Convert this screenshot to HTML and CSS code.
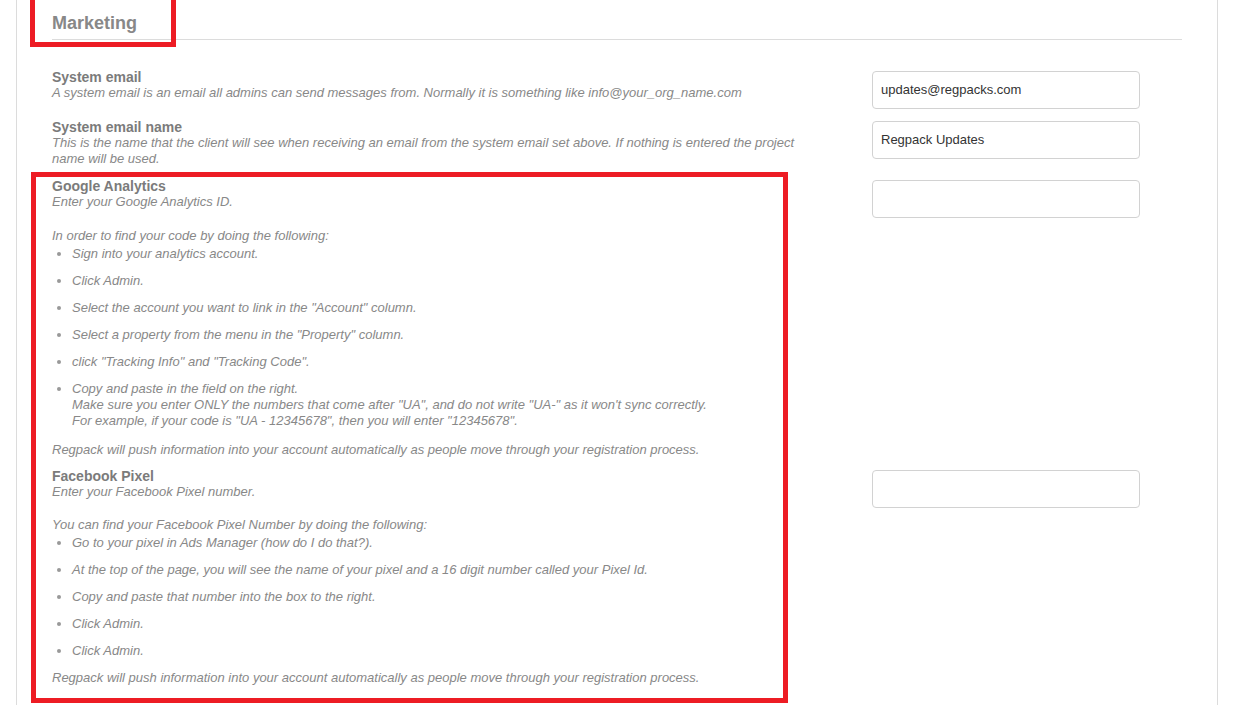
FILE: index.html
```html
<!DOCTYPE html>
<html>
<head>
<meta charset="utf-8">
<link rel="stylesheet" href="styles.css">
</head>
<body>
<div class="panel">
  <div class="panel-head"><h2 class="title">Marketing</h2></div>
  <div class="rows">
    <div class="row">
      <div class="info">
        <div class="label">System email</div>
        <p class="desc">A system email is an email all admins can send messages from. Normally it is something like info@your_org_name.com</p>
      </div>
      <div class="field"><div class="input">updates@regpacks.com</div></div>
    </div>
    <div class="row">
      <div class="info">
        <div class="label">System email name</div>
        <p class="desc">This is the name that the client will see when receiving an email from the system email set above. If nothing is entered the project name will be used.</p>
      </div>
      <div class="field"><div class="input">Regpack Updates</div></div>
    </div>
    <div class="row row-ga">
      <div class="info">
        <div class="label">Google Analytics</div>
        <p class="desc">Enter your Google Analytics ID.</p>
        <p class="desc gap gap-ga">In order to find your code by doing the following:</p>
        <ul class="steps steps-ga">
          <li>Sign into your analytics account.</li>
          <li>Click Admin.</li>
          <li>Select the account you want to link in the "Account" column.</li>
          <li>Select a property from the menu in the "Property" column.</li>
          <li>click "Tracking Info" and "Tracking Code".</li>
          <li>Copy and paste in the field on the right.<br>Make sure you enter ONLY the numbers that come after "UA", and do not write "UA-" as it won't sync correctly.<br>For example, if your code is "UA - 12345678", then you will enter "12345678".</li>
        </ul>
        <p class="desc after">Regpack will push information into your account automatically as people move through your registration process.</p>
      </div>
      <div class="field"><div class="input"></div></div>
    </div>
    <div class="row">
      <div class="info">
        <div class="label">Facebook Pixel</div>
        <p class="desc">Enter your Facebook Pixel number.</p>
        <p class="desc gap">You can find your Facebook Pixel Number by doing the following:</p>
        <ul class="steps steps-fb">
          <li>Go to your pixel in Ads Manager (how do I do that?).</li>
          <li>At the top of the page, you will see the name of your pixel and a 16 digit number called your Pixel Id.</li>
          <li>Copy and paste that number into the box to the right.</li>
          <li>Click Admin.</li>
          <li>Click Admin.</li>
        </ul>
        <p class="desc">Regpack will push information into your account automatically as people move through your registration process.</p>
      </div>
      <div class="field"><div class="input"></div></div>
    </div>
  </div>
  <div class="mark mark-title"></div>
  <div class="mark mark-block"></div>
</div>
</body>
</html>
```
FILE: styles.css
```css
html, body {
  margin: 0;
  padding: 0;
  background: #fff;
  overflow: hidden;
}
body {
  font-family: "Liberation Sans", Arial, sans-serif;
  height: 705px;
}
.panel {
  position: relative;
  margin-left: 16px;
  width: 1202px;
  height: 705px;
  border-left: 1px solid #dcdcdc;
  border-right: 1px solid #dcdcdc;
  padding: 0 35px;
  box-sizing: border-box;
}
.panel-head {
  padding-top: 12px;
  border-bottom: 1px solid #dcdcdc;
  height: 27px;
}
.title {
  margin: 0;
  font-size: 18px;
  line-height: 22px;
  font-weight: bold;
  color: #888;
}
.rows {
  padding-top: 29px;
  display: flex;
  flex-direction: column;
  gap: 10px;
}
.row {
  display: flex;
  align-items: flex-start;
}
.row-ga {
  margin-top: 1px;
}
.info {
  width: 750px;
}
.field {
  margin-left: 70px;
  padding-top: 2px;
}
.input {
  width: 268px;
  height: 38px;
  box-sizing: border-box;
  border: 1px solid #d2d2d2;
  border-radius: 4px;
  padding: 0 8px;
  font-size: 13px;
  line-height: 36px;
  color: #333;
}
.label {
  font-size: 14px;
  line-height: 16px;
  font-weight: bold;
  color: #7b7b7b;
}
.desc {
  margin: 0;
  font-size: 13px;
  line-height: 16px;
  font-style: italic;
  color: #888;
}
.desc.gap {
  margin-top: 17px;
}
.desc.gap-ga {
  margin-top: 18px;
}
.desc.after {
  margin-top: 13px;
}
.steps {
  margin: 1px 0 0;
  padding-left: 20px;
  font-size: 13px;
  line-height: 16px;
  font-style: italic;
  color: #888;
}
.steps-ga {
  margin-top: 2px;
}
.steps-fb {
  margin-top: 2px;
}
.steps li {
  margin-bottom: 11px;
}
.steps li::marker {
  color: #999;
  font-style: normal;
}
.mark {
  position: absolute;
  border: 5px solid #ed1c24;
  box-sizing: border-box;
}
.mark-title {
  left: 13px;
  top: -10px;
  width: 146px;
  height: 57px;
}
.mark-block {
  left: 14px;
  top: 172px;
  width: 757px;
  height: 531px;
}
```
